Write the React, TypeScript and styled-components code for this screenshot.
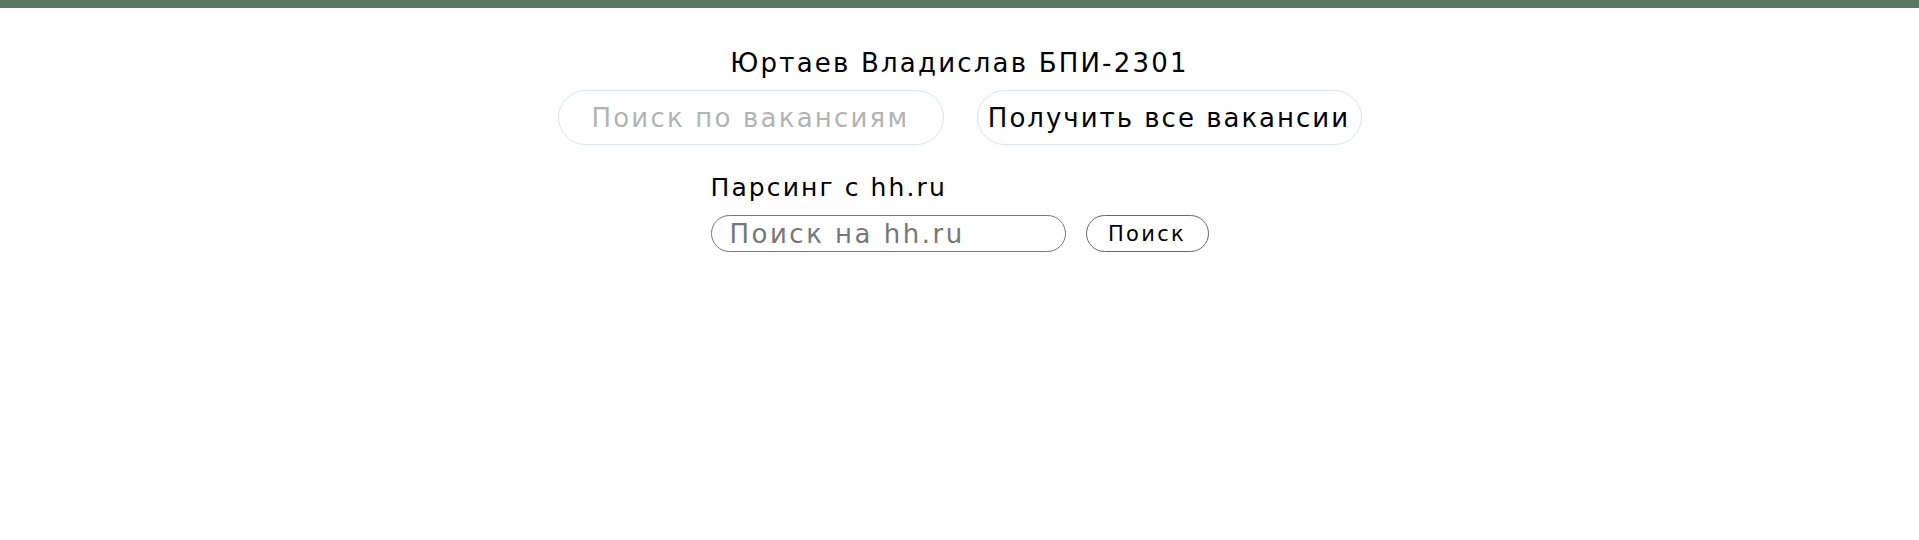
import React from "react";
import styled, { createGlobalStyle } from "styled-components";

const GlobalStyle = createGlobalStyle`
  html, body { margin: 0; padding: 0; background: #ffffff; }
  body { font-family: "DejaVu Sans", "Liberation Sans", sans-serif; color: #000; }
  * { box-sizing: border-box; }
`;

const TopBar = styled.div`
  height: 8px;
  background: #5b7763;
`;

const Main = styled.main`
  display: flex;
  flex-direction: column;
  align-items: center;
  padding-top: 40px;
`;

const Title = styled.h1`
  margin: 0;
  font-size: 26px;
  line-height: 30px;
  font-weight: 400;
  letter-spacing: 2.2px;
`;

const SearchRow = styled.div`
  display: flex;
  gap: 33px;
  margin-top: 12px;
`;

const PillInput = styled.input`
  width: 386px;
  height: 55px;
  border: 1px solid #dae2f7;
  border-radius: 28px;
  padding: 0 0 0 33px;
  font-family: inherit;
  font-size: 26px;
  letter-spacing: 2.2px;
  outline: none;
  background: #fff;
  &::placeholder { color: #b3b3b3; }
`;

const PillButton = styled.button`
  width: 385px;
  height: 55px;
  border: 1px solid #dae2f7;
  border-radius: 28px;
  background: #fff;
  font-family: inherit;
  font-size: 26px;
  letter-spacing: 2px;
  color: #000;
  padding: 0;
  cursor: pointer;
`;

const ParseSection = styled.section`
  width: 498px;
  margin-top: 29px;
`;

const SectionTitle = styled.h2`
  margin: 0;
  font-size: 25px;
  line-height: 28px;
  font-weight: 400;
  letter-spacing: 2.1px;
`;

const ParseRow = styled.div`
  display: flex;
  gap: 20px;
  margin-top: 13px;
`;

const SmallInput = styled.input`
  width: 355px;
  height: 37px;
  border: 1px solid #777;
  border-radius: 19px;
  padding: 0 0 0 18px;
  font-family: inherit;
  font-size: 26px;
  letter-spacing: 2.5px;
  outline: none;
  background: #fff;
  &::placeholder { color: #777; }
`;

const SmallButton = styled.button`
  width: 123px;
  height: 37px;
  border: 1px solid #666;
  border-radius: 19px;
  background: #fff;
  font-family: inherit;
  font-size: 21px;
  letter-spacing: 2.3px;
  color: #000;
  padding: 0;
  cursor: pointer;
`;

export default function App() {
  return (
    <>
      <GlobalStyle />
      <TopBar />
      <Main>
        <Title>Юртаев Владислав БПИ-2301</Title>
        <SearchRow>
          <PillInput placeholder="Поиск по вакансиям" />
          <PillButton>Получить все вакансии</PillButton>
        </SearchRow>
        <ParseSection>
          <SectionTitle>Парсинг с hh.ru</SectionTitle>
          <ParseRow>
            <SmallInput placeholder="Поиск на hh.ru" />
            <SmallButton>Поиск</SmallButton>
          </ParseRow>
        </ParseSection>
      </Main>
    </>
  );
}
